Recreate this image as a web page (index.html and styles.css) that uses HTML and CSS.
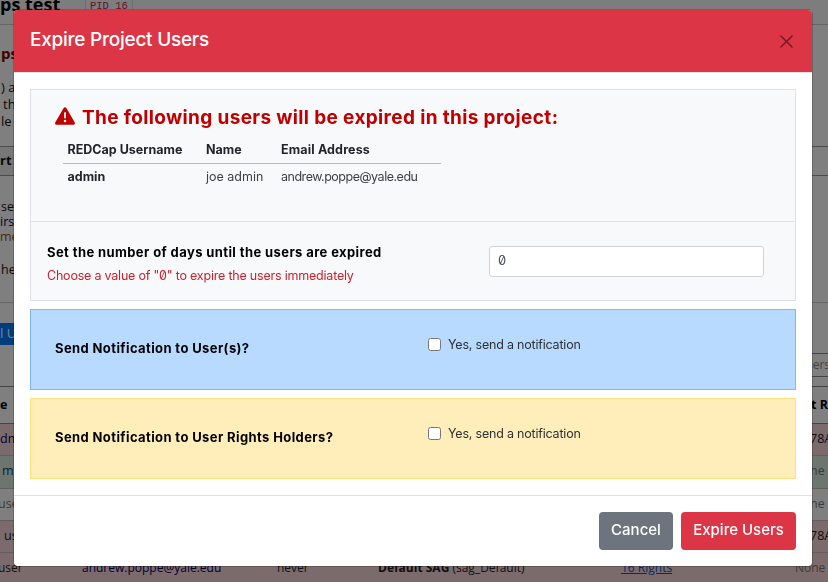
FILE: index.html
```html
<!DOCTYPE html>
<html lang="en">
<head>
<meta charset="utf-8">
<title>Expire Project Users</title>
<link rel="stylesheet" href="styles.css">
</head>
<body>
<div class="page">
  <div class="title"><span class="name">ps test</span><span class="pid">PID 16</span></div>
  <div class="intro"><h2>ps</h2><p class="i1">) a</p><p class="i2">th</p><p class="i3">le</p></div>
  <div class="tab">rt</div>
  <div class="notes"><p>se</p><p class="link">irs</p><p class="orange">me</p><p class="last">he</p></div>
  <div class="tools"><span class="add">l U</span><span class="search">sers</span></div>
  <div class="row head"><span>e</span><span class="right">t R</span></div>
  <div class="row pink"><span class="c0 navy">dm</span><span class="right dark">78A</span></div>
  <div class="row green"><span class="c2 link">m</span><span class="right">ne</span></div>
  <div class="row"><span class="cm">use</span><span class="right">ne</span></div>
  <div class="row pink"><span class="c4 dark">us</span><span class="right dark">78A</span></div>
  <div class="row pink full"><span class="cm dark">user</span><span class="navy email">andrew.poppe@yale.edu</span><span class="dark never">never</span><span class="dark sag"><b>Default SAG</b> (sag_Default)</span><span class="rights">16 Rights</span><span>None</span></div>
</div>
<div class="backdrop">
  <div class="modal" role="dialog">
    <header class="modal-header">
      <h1><span class="t t-title">Expire Project Users</span></h1>
      <svg class="close" viewBox="0 0 14 14"><path d="M1 1 13 13M13 1 1 13"/></svg>
    </header>
    <main class="modal-body">
      <section class="panel">
        <div class="users">
          <h2><svg class="warn" viewBox="0 0 512 448"><path fill-rule="evenodd" d="M256 0c14 0 27 7 34 20l216 368c15 27-4 60-34 60H40c-31 0-50-33-34-60L222 20c7-13 20-20 34-20zm0 128c-13 0-24 11-24 24v112a24 24 0 0 0 48 0V152c0-13-11-24-24-24zm0 192a32 32 0 1 0 0 64 32 32 0 0 0 0-64z"/></svg><span class="t t-heading">The following users will be expired in this project:</span></h2>
          <div class="table">
            <div class="tr th"><span class="t t-user">REDCap Username</span><span class="t t-name">Name</span><span class="t t-mail">Email Address</span></div>
            <div class="tr"><b class="t t-admin">admin</b><span class="t t-joe">joe admin</span><span class="t t-addr">andrew.poppe@yale.edu</span></div>
          </div>
        </div>
        <div class="days">
          <div class="days-label"><b class="t t-days">Set the number of days until the users are expired</b><p class="t t-hint">Choose a value of "0" to expire the users immediately</p></div>
          <input class="days-input" type="text" value="0">
        </div>
      </section>
      <section class="notify blue"><b class="t t-nu">Send Notification to User(s)?</b><label><input type="checkbox"><span class="t t-yes">Yes, send a notification</span></label></section>
      <section class="notify yellow"><b class="t t-nr">Send Notification to User Rights Holders?</b><label><input type="checkbox"><span class="t t-yes">Yes, send a notification</span></label></section>
    </main>
    <footer class="modal-footer"><button class="cancel"><span class="t t-cancel">Cancel</span></button><button class="expire"><span class="t t-expire">Expire Users</span></button></footer>
  </div>
</div>
</body>
</html>
```
FILE: styles.css
```css
* { box-sizing: border-box; }
body { margin: 0; height: 582px; overflow: hidden; background: #fff; color: #212529; font-family: Inter, "Liberation Sans", sans-serif; font-size: 13px; }
h1, h2, p { margin: 0; }
.page { height: 582px; overflow: hidden; font-family: "Open Sans", sans-serif; white-space: nowrap; color: #111; }
.title { height: 25px; display: flex; border-bottom: 1px solid #ccc; background: #fafafa; overflow: hidden; }
.name { width: 85px; font-size: 18px; font-weight: 700; line-height: 24px; margin-top: -8px; padding-left: 0; color: #000; }
.pid { height: 20px; margin-top: -5px; padding: 0 4px; border: 1px solid #ddd; color: #c7254e; font: 10.5px/21px "Liberation Mono", monospace; }
.intro { height: 121px; padding: 18px 0 0; }
.intro h2 { font-size: 15px; line-height: 20px; color: #800000; padding-left: 1px; }
.intro p { line-height: 17px; }
.intro .i1 { margin-top: 16px; margin-left: 1px; }
.intro .i2 { margin-left: 3px; }
.intro .i3 { margin-left: 1px; }
.tab { height: 30px; width: 828px; line-height: 26px; border: solid #999; border-width: 1px 0; background: linear-gradient(90deg, #eee 20px, #fff 20px); font-weight: 700; }
.notes { height: 127px; padding-top: 23px; border-bottom: 1px solid #ccc; line-height: 15px; font-size: 12.5px; }
.notes p { margin-left: 1px; }
.notes .link { color: #000066; margin-left: 0; }
.notes .orange { color: #a35400; margin-left: 0; }
.notes .last { margin-top: 18px; margin-left: 1px; }
.tools { height: 84px; display: flex; justify-content: space-between; border-bottom: 1px solid #888; }
.add { width: 100px; height: 22px; margin-top: 20px; line-height: 20px; background: #007bff; color: #fff; }
.search { width: 30px; height: 24px; margin-top: 50px; padding-left: 9px; line-height: 22px; border: solid #888; border-width: 1px 0; color: #888; font-size: 12px; }
.row { height: 32.25px; display: flex; justify-content: space-between; align-items: center; padding-bottom: 2px; border-bottom: 1px solid #c8bcbc; color: #777; font-size: 12.5px; }
.row.head { height: 37px; font-weight: 700; color: #000; border-color: #888; }
.right { width: 18px; }
.head .right { width: 17px; }
.pink { background: #f8d7da; }
.green { background: #d9ecdd; }
.dark { color: #222; }
.navy { color: #000060; }
.link { color: #104080; }
.c2 { margin-left: 2px; }
.c4 { margin-left: 4px; }
.cm { margin-left: -2px; }
.row.full { display: grid; grid-template-columns: 82px 195px 101px 243px 174px 33px; justify-content: start; padding-bottom: 3px; font-size: 12px; }
.rights { color: #0056c8; text-decoration: underline; }

.backdrop { position: fixed; inset: 0; padding: 10px 16px 16px 14px; background: rgba(0, 0, 0, .5); }
.modal { height: 556px; background: #fff; border-radius: 4px; box-shadow: 0 0 0 1px rgba(0, 0, 0, .2); overflow: hidden; display: flex; flex-direction: column; }
.modal-header { height: 63px; display: flex; justify-content: space-between; align-items: center; padding: 0 19px 0 16px; background: #dc3545; color: #fff; border-bottom: 1px solid #dee2e6; }
h1 { font-size: 19px; font-weight: 500; line-height: 28px; margin-top: -3px; }
.close { width: 13px; height: 13px; fill: none; stroke: #701b24; stroke-width: 1.5; stroke-linecap: round; }
.modal-body { height: 422px; padding: 16px 16px 0; }
.t { display: inline-block; white-space: nowrap; }
.t-title { letter-spacing: -.25px; }
.t-heading { letter-spacing: .36px; }
.t-mail { letter-spacing: .15px; }
.t-addr { letter-spacing: -.48px; }
.t-days { letter-spacing: .4px; }
.t-hint { letter-spacing: -.21px; }
.t-nu, .t-nr { margin-top: -4px; letter-spacing: .39px; }
.t-yes { font-size: 12.5px; letter-spacing: -.2px; }
.panel { height: 212px; border: 1px solid #dee2e6; background: #f8f9fb; }
.users { height: 132px; padding: 15px 24px; border-bottom: 1px solid #dee2e6; }
.users h2 { display: flex; align-items: center; height: 24px; font-size: 19px; color: #c00000; }
.warn { width: 20px; height: 18px; margin-right: 7px; margin-top: -2px; fill: currentColor; }
.table { width: 378px; margin: 8px 0 0 8px; }
.tr { height: 25px; display: grid; grid-template-columns: 138.5px 75px 1fr; align-items: center; padding-left: 4.5px; font-size: 12.5px; color: #3d4145; }
.th { height: 27px; padding-bottom: 1px; font-weight: 700; border-bottom: 1px solid #b5b8bb; color: #212529; }
.tr b { color: #212529; }
.days { height: 78px; display: flex; justify-content: space-between; padding: 20px 31px 0 16px; }
.days-label { display: flex; flex-direction: column; line-height: 20px; color: #000; }
.days-label p { margin-top: 4px; color: #c9222d; font-size: 12.5px; font-feature-settings: "zero"; }
.days-input { width: 275px; height: 31px; margin-top: 4px; padding: 0 8px 3px; border: 1px solid #ced4da; border-radius: 3px; background: #fff; color: #495057; font: 13px Inter, sans-serif; font-feature-settings: "zero"; }
.notify { height: 81px; margin-top: 8px; display: grid; grid-template-columns: 373px 1fr; align-items: center; padding-left: 24px; border: 1px solid #7ab8fb; background: #b8daff; color: #000; }
.notify.yellow { border-color: #ffdf7e; background: #ffeeba; }
.notify label { display: flex; align-items: center; margin-top: -10px; color: #2c3136; }
.notify input { width: 13px; height: 13px; margin: 0 7px 0 0; }
.modal-footer { flex: 1; display: flex; justify-content: flex-end; gap: 8px; padding: 16px 16px 0; border-top: 1px solid #dee2e6; }
button { width: 74px; height: 38px; padding: 0 0 3px; border: 0; border-radius: 4px; background: #6c757d; color: #fff; font: 500 15px Inter, sans-serif; }
.expire { width: 115px; background: #dc3545; }
```
